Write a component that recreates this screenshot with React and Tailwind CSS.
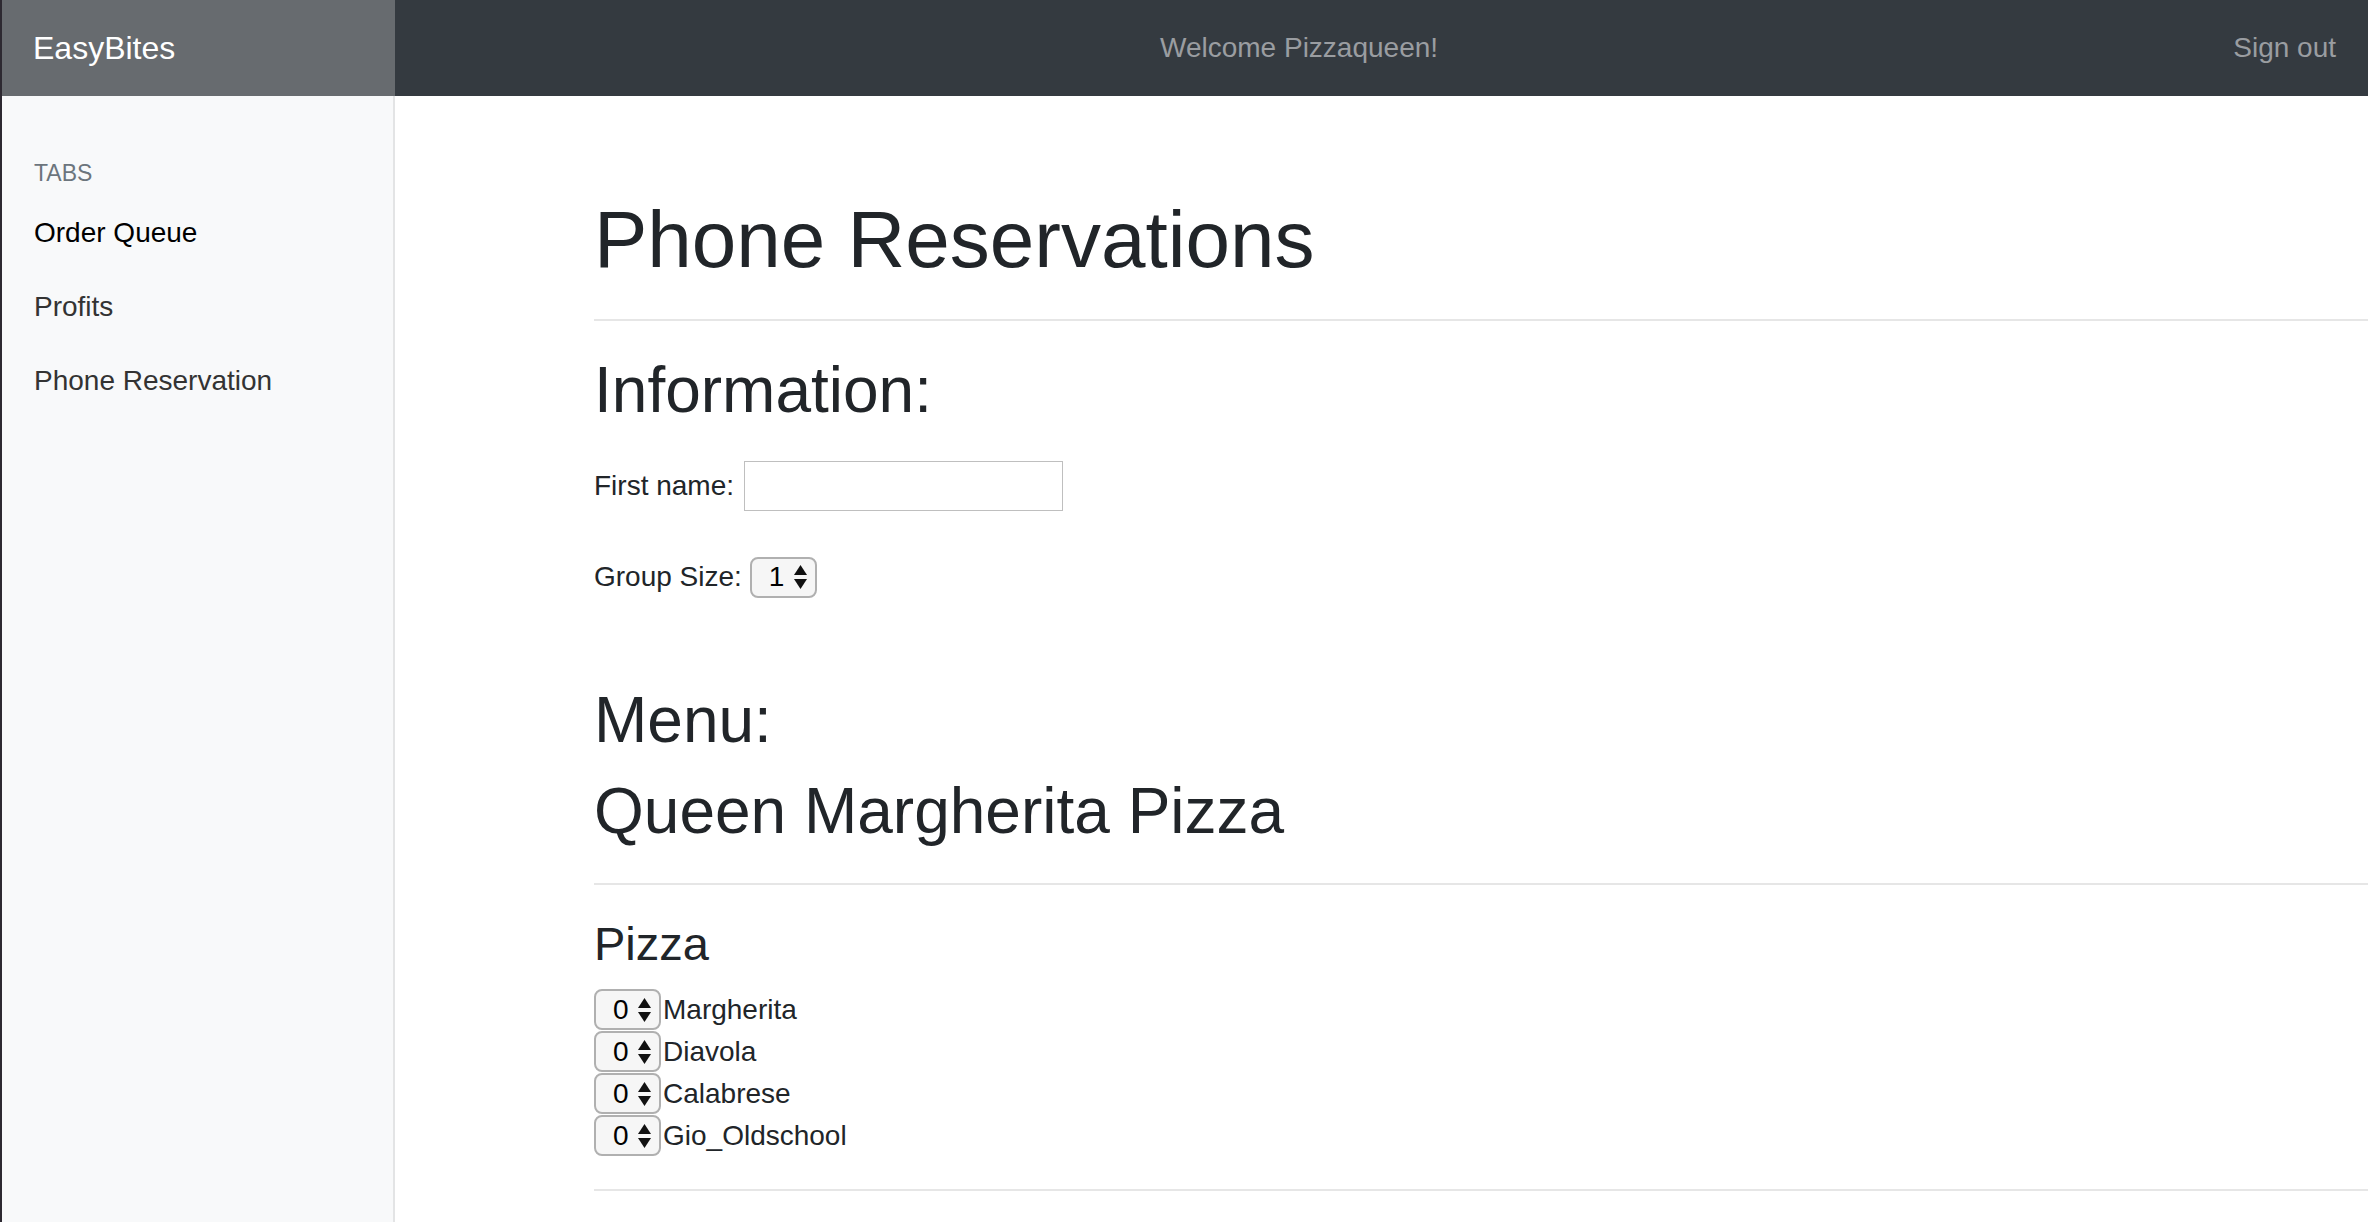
const FONT = { fontFamily: '"Liberation Sans", Arial, Helvetica, sans-serif' };

function Stepper({ value }) {
    return (
        <div className="flex items-center justify-between w-[67px] h-[41px] pl-[17px] pr-[8px] rounded-lg border-2 border-[#b0b0b0] bg-[#f6f6f6] text-[28px] leading-none text-black">
            <span>{value}</span>
            <svg width="13" height="24" viewBox="0 0 13 24" fill="#111">
                <path d="M6.5 0 L13 10 L0 10 Z" />
                <path d="M0 14 L13 14 L6.5 24 Z" />
            </svg>
        </div>
    );
}

const pizzas = ['Margherita', 'Diavola', 'Calabrese', 'Gio_Oldschool'];

export default function App() {
    return (
        <div className="h-screen flex flex-col border-l-2 border-[#2d2931] overflow-hidden" style={FONT}>
            {/* Top bar */}
            <header className="flex h-[96px] bg-[#343a40] shrink-0">
                <div className="w-[393px] flex items-center pl-[31px] bg-[#676b6f] text-white text-[32px]">
                    EasyBites
                </div>
                <div className="flex-1 flex items-center justify-between pl-[765px] pr-[32px] text-[28px] text-[#9a9da1]">
                    <span>Welcome Pizzaqueen!</span>
                    <span>Sign out</span>
                </div>
            </header>

            <div className="flex flex-1">
                {/* Sidebar */}
                <nav className="w-[393px] bg-[#f8f9fa] border-r-2 border-[#e3e4e5] pt-[66px] pl-[32px]">
                    <div className="text-[23px] text-[#6c757d] uppercase leading-none">Tabs</div>
                    <ul className="mt-[33px] flex flex-col gap-[44px] text-[28px] leading-[30px]">
                        <li className="text-black">Order Queue</li>
                        <li className="text-[#333]">Profits</li>
                        <li className="text-[#333]">Phone Reservation</li>
                    </ul>
                </nav>

                {/* Main */}
                <main className="flex-1 pl-[199px] text-[#212529]">
                    <h1 className="mt-[96px] text-[80px] leading-[96px]">Phone Reservations</h1>
                    <div className="mt-[31px] h-[2px] bg-[#e6e6e6]" />

                    <h2 className="mt-[31px] text-[64px] leading-[76px]">Information:</h2>
                    <div className="mt-[33px] flex items-center text-[28px]">
                        <label>First name:</label>
                        <input type="text" className="ml-[10px] w-[319px] h-[50px] border border-[#bfbfbf] bg-white outline-none" />
                    </div>
                    <div className="mt-[45px] flex items-center gap-[8px] text-[28px]">
                        <label>Group Size:</label>
                        <Stepper value="1" />
                    </div>

                    <h2 className="mt-[84px] text-[64px] leading-[76px]">Menu:</h2>
                    <h2 className="mt-[15px] text-[64px] leading-[76px]">Queen Margherita Pizza</h2>
                    <div className="mt-[34px] h-[2px] bg-[#e6e6e6]" />

                    <h3 className="mt-[31px] text-[47px] leading-[56px]">Pizza</h3>
                    <div className="mt-[17px] flex flex-col gap-[1px]">
                        {pizzas.map((p) => (
                            <div key={p} className="flex items-center gap-[2px] text-[28px] leading-none">
                                <Stepper value="0" />
                                <span>{p}</span>
                            </div>
                        ))}
                    </div>
                    <div className="mt-[33px] h-[2px] bg-[#e6e6e6]" />
                </main>
            </div>
        </div>
    );
}
